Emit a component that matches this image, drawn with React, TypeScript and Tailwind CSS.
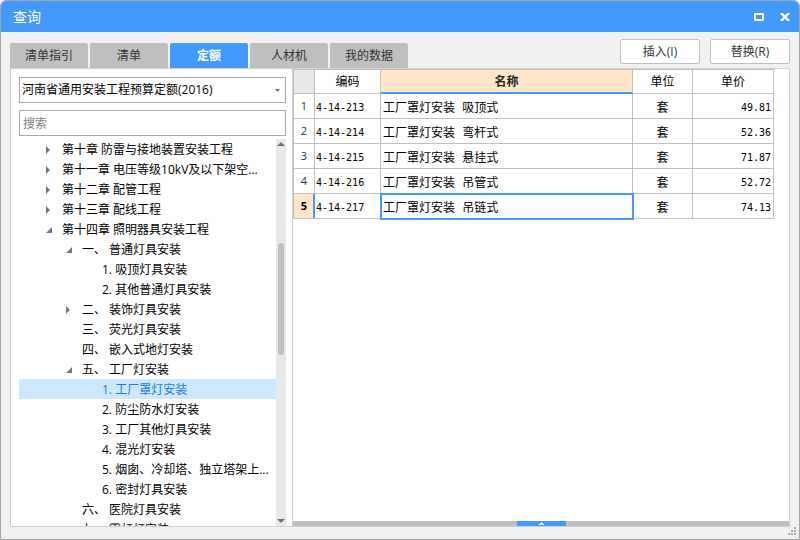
import { useState } from "react";
import clsx from "clsx";

type TreeNode = {
  label: string;
  level: 1 | 2 | 3;
  state?: "open" | "closed";
};

const tabs = ["清单指引", "清单", "定额", "人材机", "我的数据"];

const nodes: TreeNode[] = [
  { label: "第十章 防雷与接地装置安装工程", level: 1, state: "closed" },
  { label: "第十一章 电压等级10kV及以下架空...", level: 1, state: "closed" },
  { label: "第十二章 配管工程", level: 1, state: "closed" },
  { label: "第十三章 配线工程", level: 1, state: "closed" },
  { label: "第十四章 照明器具安装工程", level: 1, state: "open" },
  { label: "一、 普通灯具安装", level: 2, state: "open" },
  { label: "1. 吸顶灯具安装", level: 3 },
  { label: "2. 其他普通灯具安装", level: 3 },
  { label: "二、 装饰灯具安装", level: 2, state: "closed" },
  { label: "三、 荧光灯具安装", level: 2 },
  { label: "四、 嵌入式地灯安装", level: 2 },
  { label: "五、 工厂灯安装", level: 2, state: "open" },
  { label: "1. 工厂罩灯安装", level: 3 },
  { label: "2. 防尘防水灯安装", level: 3 },
  { label: "3. 工厂其他灯具安装", level: 3 },
  { label: "4. 混光灯安装", level: 3 },
  { label: "5. 烟囱、冷却塔、独立塔架上...", level: 3 },
  { label: "6. 密封灯具安装", level: 3 },
  { label: "六、 医院灯具安装", level: 2 },
  { label: "七、 霓虹灯安装", level: 2 },
];

const rows = [
  { code: "4-14-213", name: "工厂罩灯安装 吸顶式", unit: "套", price: "49.81" },
  { code: "4-14-214", name: "工厂罩灯安装 弯杆式", unit: "套", price: "52.36" },
  { code: "4-14-215", name: "工厂罩灯安装 悬挂式", unit: "套", price: "71.87" },
  { code: "4-14-216", name: "工厂罩灯安装 吊管式", unit: "套", price: "52.72" },
  { code: "4-14-217", name: "工厂罩灯安装 吊链式", unit: "套", price: "74.13" },
];

const indent = { 1: "pl-[25px]", 2: "pl-[45px]", 3: "pl-[65px]" };

const TitleBar = () => (
  <header className="flex h-[31px] shrink-0 items-center justify-between bg-[#4499ff] pr-[9px] pl-3 text-white">
    <h1 className="text-sm">查询</h1>
    <div className="flex items-center gap-4">
      <button type="button" aria-label="最大化">
        <svg width="10" height="8" className="block" shapeRendering="crispEdges">
          <path d="M0 0h10v8H0zM2 2v4h6V2z" fill="currentColor" fillRule="evenodd" />
        </svg>
      </button>
      <button type="button" aria-label="关闭">
        <svg width="10" height="8" className="block">
          <path d="M1 0l8 8M9 0L1 8" stroke="currentColor" strokeWidth="2.4" />
        </svg>
      </button>
    </div>
  </header>
);

const Arrow = ({ state }: { state?: TreeNode["state"] }) => (
  <svg width="8" height="8" className="block shrink-0" fill="#777777">
    {state === "closed" && <path d="M2 0L6 4L2 8z" />}
    {state === "open" && <path d="M8 1V7H2z" />}
  </svg>
);

const Tree = () => {
  const [selected, setSelected] = useState(12);

  return (
    <div className="flex min-h-0 flex-1">
      <ul role="tree" className="min-w-0 flex-1 overflow-hidden">
        {nodes.map((node, i) => (
          <li key={node.label} role="treeitem" aria-selected={i === selected}>
            <button
              type="button"
              onClick={() => setSelected(i)}
              className={clsx(
                "flex h-5 w-full items-center gap-[10px] pt-[2px] text-left whitespace-pre",
                indent[node.level],
                i === selected ? "bg-[#cce8ff] text-[#1a7be6]" : "text-black"
              )}
            >
              <Arrow state={node.state} />
              <span>{node.label}</span>
            </button>
          </li>
        ))}
      </ul>
      {/* Scrollbar */}
      <div className="flex w-[10px] flex-col items-center bg-[#e8e8e8] py-[3px]">
        <svg width="8" height="4" className="block" fill="#6e6e7c">
          <path d="M0 4L4 0L8 4z" />
        </svg>
        <div className="flex w-full flex-1 flex-col items-center">
          <div className="basis-[26%]" />
          <div className="w-[6px] basis-[30%] rounded-full bg-[#c0c0c0]" />
        </div>
        <svg width="8" height="4" className="block" fill="#6e6e7c">
          <path d="M0 0L4 4L8 0z" />
        </svg>
      </div>
    </div>
  );
};

const Sidebar = () => (
  <aside className="flex w-[282px] shrink-0 flex-col border-r border-[#d0d0d0] pt-2 pr-[6px] pl-2">
    <div className="relative">
      <select
        aria-label="定额库"
        className="block h-[26px] w-full appearance-none border border-[#a8a8a8] bg-white px-[2px] text-black outline-none"
      >
        <option>河南省通用安装工程预算定额(2016)</option>
      </select>
      <svg width="5" height="3" className="pointer-events-none absolute top-3 right-[6px]" fill="#777777">
        <path d="M0 0h5L2.5 3z" />
      </svg>
    </div>
    <input
      type="text"
      aria-label="搜索"
      placeholder="搜索"
      className="mt-[7px] mb-[3px] block h-[26px] w-full shrink-0 border border-[#a8a8a8] bg-white px-[3px] outline-none placeholder:text-[#808080]"
    />
    <Tree />
  </aside>
);

const QuotaTable = () => {
  const [current, setCurrent] = useState(4);

  return (
    <table className="w-[481px] table-fixed border-collapse text-black [&_td]:border [&_td]:border-[#c0c0c0] [&_td]:pt-[3px] [&_th]:border [&_th]:border-[#c0c0c0]">
      <colgroup>
        <col className="w-[21px]" />
        <col className="w-[66px]" />
        <col className="w-[252px]" />
        <col className="w-[60px]" />
        <col />
      </colgroup>
      <thead>
        <tr className="h-6">
          <th className="bg-[#e8e8e8]" />
          <th className="font-normal">编码</th>
          <th className="border-b-[#4499ff]! bg-[#ffe6c8] font-bold text-[#222222] shadow-[inset_0_-1px_0_#4499ff]">
            名称
          </th>
          <th className="font-normal">单位</th>
          <th className="font-normal">单价</th>
        </tr>
      </thead>
      <tbody className="font-['DejaVu_Sans_Mono','Noto_Sans_CJK_SC',monospace]">
        {rows.map((row, i) => (
          <tr key={row.code} className="h-[25px]" onClick={() => setCurrent(i)}>
            <th
              className={clsx(
                "font-['Open_Sans',sans-serif] text-[11px]",
                i === current
                  ? "border-r-[#4499ff]! bg-[#ffe6c8] font-bold shadow-[inset_-1px_0_0_#4499ff]"
                  : "font-normal text-[#333333]"
              )}
            >
              {i + 1}
            </th>
            <td className="pl-px text-[10px]">{row.code}</td>
            <td className={clsx("pl-[2px]", i === current && "outline-2 -outline-offset-1 outline-[#4499ff]")}>
              {row.name}
            </td>
            <td className="text-center">{row.unit}</td>
            <td className="pr-[2px] text-right text-[10px]">{row.price}</td>
          </tr>
        ))}
      </tbody>
    </table>
  );
};

const App = () => {
  const [tab, setTab] = useState("定额");

  return (
    <div className="flex h-screen flex-col overflow-hidden rounded-t-md border border-[#a5a5a5] bg-[#f1f1f1] font-['Open_Sans','Noto_Sans_CJK_SC',sans-serif] text-xs leading-4">
      <TitleBar />
      <div className="flex shrink-0 items-end justify-between pt-[7px] pr-[9px] pl-[9px]">
        <nav role="tablist" className="flex gap-[2px]">
          {tabs.map((name) => (
            <button
              key={name}
              type="button"
              role="tab"
              aria-selected={name === tab}
              onClick={() => setTab(name)}
              className={clsx(
                "h-[25px] w-[78px] rounded-t-xs",
                name === tab ? "bg-[#4499ff] font-bold text-white" : "bg-[#bfbfbf] text-[#333333]"
              )}
            >
              {name}
            </button>
          ))}
        </nav>
        <div className="flex gap-[10px] pb-1">
          <button type="button" className="h-[25px] w-20 rounded-xs border border-[#c0c0c0] bg-white text-[#333333]">
            插入(I)
          </button>
          <button type="button" className="h-[25px] w-20 rounded-xs border border-[#c0c0c0] bg-white text-[#333333]">
            替换(R)
          </button>
        </div>
      </div>
      <main className="mx-[9px] flex min-h-0 flex-1 border border-[#d0d0d0] bg-white">
        <Sidebar />
        <section className="flex min-w-0 flex-1 flex-col justify-between">
          <QuotaTable />
          <div className="flex h-[5px] justify-center bg-[#bfbfbf]">
            <button
              type="button"
              aria-label="展开"
              className="flex w-[49px] items-center justify-center bg-[#4499ff] text-white"
            >
              <svg width="5" height="3" className="block" fill="currentColor">
                <path d="M2 0h1v1h1v1h1v1H0V2h1V1h1z" />
              </svg>
            </button>
          </div>
        </section>
      </main>
      {/* Resize grip */}
      <footer className="flex h-3 shrink-0 items-start justify-end pr-[3px]">
        <svg width="8" height="8" className="block" fill="#a8a8a8">
          <path d="M6 0h2v2H6zM3 3h2v2H3zM6 3h2v2H6zM0 6h2v2H0zM3 6h2v2H3zM6 6h2v2H6z" />
        </svg>
      </footer>
    </div>
  );
};

export default App;
